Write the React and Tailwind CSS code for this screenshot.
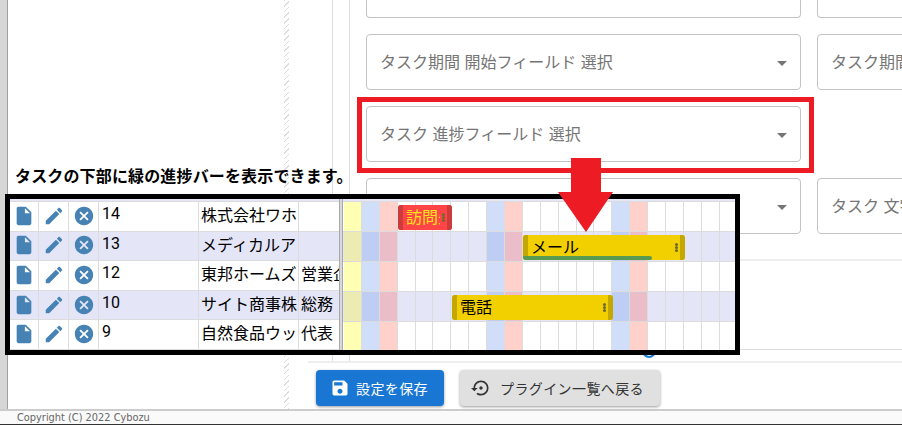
const JP = { fontFamily: '"Noto Sans CJK JP", sans-serif' };

const Icon = ({ d, className }) => (
  <svg viewBox="0 0 24 24" className={className} fill="currentColor">
    <path d={d} />
  </svg>
);

const DOC = "M6 2c-1.1 0-1.99.9-1.99 2L4 20c0 1.1.89 2 1.99 2H18c1.1 0 2-.9 2-2V8l-6-6H6zm7 7V3.5L18.5 9H13z";
const EDIT = "M3 17.25V21h3.75L17.81 9.94l-3.75-3.75L3 17.25zM20.71 7.04c.39-.39.39-1.02 0-1.41l-2.34-2.34c-.39-.39-1.02-.39-1.41 0l-1.83 1.83 3.75 3.75 1.83-1.83z";
const CANCEL = "M12 2C6.47 2 2 6.47 2 12s4.47 10 10 10 10-4.47 10-10S17.53 2 12 2zm5 13.59L15.59 17 12 13.41 8.41 17 7 15.59 10.59 12 7 8.41 8.41 7 12 10.59 15.59 7 17 8.41 13.41 12 17 15.59z";
const SAVE = "M17 3H5c-1.11 0-2 .9-2 2v14c0 1.1.89 2 2 2h14c1.1 0 2-.9 2-2V7l-4-4zm-5 16c-1.66 0-3-1.34-3-3s1.34-3 3-3 3 1.34 3 3-1.34 3-3 3zm3-10H5V5h10v4z";
const RESTORE = "M14 12c0-1.1-.9-2-2-2s-2 .9-2 2 .9 2 2 2 2-.9 2-2zm-2-9c-4.97 0-9 4.03-9 9H0l4 4 4-4H5c0-3.87 3.13-7 7-7s7 3.13 7 7-3.13 7-7 7c-1.51 0-2.91-.49-4.06-1.3l-1.42 1.44C8.04 20.3 9.94 21 12 21c4.97 0 9-4.03 9-9s-4.03-9-9-9z";

const Field = ({ text, arrow = true, className = "" }) => (
  <div className={`relative flex items-center w-[435px] shrink-0 h-[56px] border border-[#c4c4c4] rounded pl-[13px] pb-[3px] text-base [word-spacing:1px] text-[#757575] whitespace-nowrap ${className}`}>
    {text}
    {arrow && (
      <Icon d="M7 10l5 5 5-5z" className="absolute right-[6px] top-[16px] w-6 h-6 text-[#757575]" />
    )}
  </div>
);

const rows = [
  { id: "14", a: "株式会社ワホ", b: "" },
  { id: "13", a: "メディカルア", b: "" },
  { id: "12", a: "東邦ホームズ", b: "営業企" },
  { id: "10", a: "サイト商事株", b: "総務" },
  { id: "9", a: "自然食品ウッ", b: "代表" },
];

const cellColor = (i, alt) => {
  if (i === 0) return alt ? "bg-[#ecebb2]" : "bg-[#ffffb4]";
  if (i === 1 || i === 8 || i === 15) return alt ? "bg-[#bdcdf4]" : "bg-[#d1def9]";
  if (i === 2 || i === 9 || i === 16) return alt ? "bg-[#ebbdc8]" : "bg-[#ffd1ca]";
  return "";
};

const Dots = ({ className }) => (
  <div className={`flex flex-col gap-[0.5px] shrink-0 ${className}`}>
    <span className="w-[3px] h-[2.5px] rounded-full bg-[#6e6a30]" />
    <span className="w-[3px] h-[2.5px] rounded-full bg-[#6e6a30]" />
    <span className="w-[3px] h-[2.5px] rounded-full bg-[#6e6a30]" />
  </div>
);

const Bar = ({ text, className, handle, children, textClass = "text-black" }) => (
  <div className={`absolute h-[25px] rounded-[3px] flex items-center justify-between overflow-hidden ${className}`}>
    <span className={`w-[5px] h-full shrink-0 ${handle}`} />
    <span className={`flex-1 min-w-0 ml-[3px] pb-[4px] text-base leading-[20px] whitespace-nowrap overflow-hidden ${textClass}`}>{text}</span>
    <Dots className="mx-[2px]" />
    <span className={`w-[5px] h-full shrink-0 ${handle}`} />
    {children}
  </div>
);

const Row = ({ r, i }) => {
  const alt = i % 2 === 1;
  return (
    <div className={`flex h-[30px] border-b border-[#dcdcdc] text-base text-black ${alt ? "bg-[#e4e6f8]" : "bg-white"}`}>
      <div className="w-[29px] flex items-center justify-center pb-[1px] border-r border-[#dcdcdc] text-[#4682b4] shrink-0"><Icon d={DOC} className="w-[22px] h-[22px] ml-[-1px]" /></div>
      <div className="w-[30px] flex items-center justify-center pb-[1px] border-r border-[#dcdcdc] text-[#4682b4] shrink-0"><Icon d={EDIT} className="w-[22px] h-[22px]" /></div>
      <div className="w-[30px] flex items-center justify-center pb-[1px] border-r border-[#dcdcdc] text-[#4682b4] shrink-0"><Icon d={CANCEL} className="w-[22px] h-[22px]" /></div>
      <div className="w-[100px] pl-[3px] border-r border-[#dcdcdc] shrink-0 leading-[24px]" style={{ fontFamily: 'Roboto, sans-serif' }}>{r.id}</div>
      <div className="w-[100px] pl-[2px] border-r border-[#dcdcdc] shrink-0 leading-[24px] whitespace-nowrap overflow-hidden">{r.a}</div>
      <div className="flex-1 min-w-0 pl-[2px] leading-[24px] whitespace-nowrap overflow-hidden">{r.b}</div>
    </div>
  );
};

export default function App() {
  return (
    <div className="relative w-[902px] h-[425px] overflow-hidden bg-white flex flex-col" style={JP}>
      <div className="flex h-[409px]">
        <div className="w-[8px] shrink-0 bg-[#d6d6d6] border-r border-[#a0a0a0]" />
        {/* left pane */}
        <div className="w-[300px] shrink-0 flex">
          <div className="w-[276px]" />
          <div className="w-[5px] h-full bg-[repeating-linear-gradient(135deg,#dddddd_0_1px,transparent_1px_4px)]" />
        </div>
        {/* right side */}
        <div className="flex-1 min-w-0 flex flex-col">
          <div className="h-[363px] flex border-b-2 border-[#eeeeee] shrink-0">
            <div className="w-[25px] shrink-0 border-r border-[#dddddd]" />
            <div className="w-[17px] shrink-0 border-r border-[#dddddd]" />
            <div className="flex-1 min-w-0 overflow-hidden">
              <div className="h-[350px] border-b border-[#dddddd]">
                <div className="h-[261px] border-b-2 border-[#eeeeee] pl-[16px] overflow-hidden">
                  <div className="flex flex-col gap-4">
                    <div className="flex gap-4">
                      <Field text="" arrow={false} className="!h-[18px] border-t-0 rounded-t-none" />
                      <Field text="" arrow={false} className="!h-[18px] border-t-0 rounded-t-none" />
                    </div>
                    <div className="flex gap-4">
                      <Field text="タスク期間 開始フィールド 選択" />
                      <Field text="タスク期間 終了フィールド 選択" />
                    </div>
                    <div className="flex gap-4">
                      <Field text="タスク 進捗フィールド 選択" />
                    </div>
                    <div className="flex gap-4">
                      <Field text="" />
                      <Field text="タスク 文字フィールド 選択" />
                    </div>
                  </div>
                </div>
              </div>
            </div>
          </div>
          <div className="flex items-start gap-4 pl-2 pt-[7px]">
            <button className="flex items-center justify-start pl-[14px] gap-[6px] w-[128px] h-[36px] rounded bg-[#1976d2] text-white text-sm tracking-[0.4px] shadow-[0_1px_3px_rgba(0,0,0,0.4)]">
              <Icon d={SAVE} className="w-5 h-5" />
              設定を保存
            </button>
            <button className="flex items-center justify-start pl-[11px] gap-[9px] w-[200px] h-[36px] rounded bg-[#e0e0e0] text-[#333333] text-sm tracking-[0.4px] shadow-[0_1px_3px_rgba(0,0,0,0.4)]">
              <Icon d={RESTORE} className="w-5 h-5" />
              プラグイン一覧へ戻る
            </button>
          </div>
        </div>
      </div>

      {/* footer */}
      <div className="h-[16px] flex items-center pl-[17px] pt-[1px] border-t-2 border-b border-t-[#cccccc] border-b-[#333333] bg-[#fafafa] text-[9.8px] text-[#666666]" style={{ fontFamily: '"DejaVu Sans", sans-serif' }}>
        Copyright (C) 2022 Cybozu
      </div>

      {/* radio peeking under the frame */}
      <div className="absolute left-[642px] top-[344px] w-[14px] h-[14px] rounded-full border-2 border-[#1976d2]" />

      {/* annotation caption */}
      <div className="absolute left-[15px] top-[163px] text-base font-bold leading-[24px] tracking-[0.15px] text-black whitespace-nowrap">
        タスクの下部に緑の進捗バーを表示できます。
      </div>

      {/* gantt screenshot inset */}
      <div className="absolute left-[5px] top-[194px] w-[735px] h-[161px] border-[5px] border-black bg-white flex overflow-hidden">
        <div className="w-[329px] shrink-0 flex flex-col">
          <div className="h-[3px] shrink-0 bg-[#e4e6f8] border-b border-[#dcdcdc]" />
          {rows.map((r, i) => <Row key={r.id} r={r} i={i} />)}
        </div>
        <div className="w-[4px] shrink-0 bg-[#d8d8d8] border-x border-[#a8a8a8]" />
        <div className="relative flex-1 min-w-0 flex flex-col">
          <div className="h-[3px] shrink-0 bg-[#e4e6f8] border-b border-[#dcdcdc]" />
          {rows.map((r, ri) => {
            const alt = ri % 2 === 1;
            return (
              <div key={r.id} className={`flex h-[30px] shrink-0 pl-[1px] border-b border-[#dcdcdc] ${alt ? "bg-[#e4e6f8]" : "bg-white"}`}>
                {Array.from({ length: 22 }).map((_, i) => (
                  <div key={i} className={`w-[17.9px] shrink-0 border-r border-[#dcdcdc] ${cellColor(i, alt)}`} />
                ))}
              </div>
            );
          })}
          <Bar text="訪問先" className="left-[55px] top-[6px] w-[54px] bg-[#ff4545]" handle="bg-[#cc3c3c]" textClass="text-[#ffe11f]" />
          <Bar text="メール" className="left-[180px] top-[36px] w-[162px] bg-[#f2d000]" handle="bg-[#c4a800]">
            <span className="absolute left-0 bottom-0 w-[129px] h-[4px] rounded-r-[2px] bg-[#5a9a50]" />
          </Bar>
          <Bar text="電話" className="left-[109px] top-[96px] w-[161px] bg-[#f2d000]" handle="bg-[#c4a800]" />
        </div>
      </div>

      {/* red highlight box */}
      <div className="absolute left-[357px] top-[97px] w-[457px] h-[76px] border-[5px] border-[#ed1c24]" />

      {/* red arrow */}
      <svg className="absolute left-[556px] top-[156px]" width="60" height="78" viewBox="0 0 60 78">
        <polygon points="15,2 45,2 45,36 57,36 30,76 2,36 15,36" fill="#ed1c24" />
      </svg>
    </div>
  );
}
